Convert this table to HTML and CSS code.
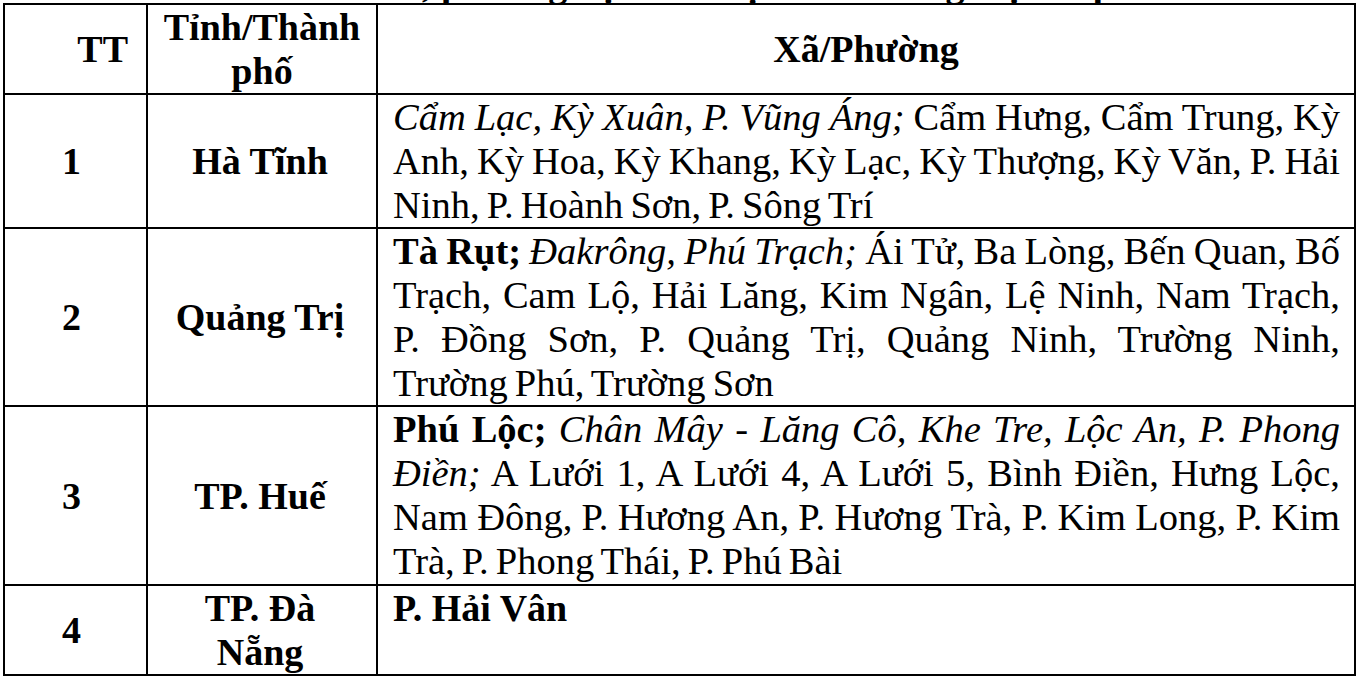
FILE: index.html
```html
<!DOCTYPE html>
<html lang="vi">
<head>
<meta charset="utf-8">
<title>Danh sách xã/phường</title>
<link rel="stylesheet" href="styles.css">
</head>
<body>
<div class="title-clip"><div class="title">Danh sách các xã, phường dự kiến chịu ảnh hưởng trực tiếp</div></div>
<table class="grid">
  <colgroup>
    <col class="c-tt">
    <col class="c-prov">
    <col class="c-list">
  </colgroup>
  <thead>
    <tr class="r-head">
      <th class="tt-head">TT</th>
      <th class="prov-head">Tỉnh/Thành phố</th>
      <th>Xã/Phường</th>
    </tr>
  </thead>
  <tbody>
    <tr class="r1">
      <td class="num">1</td>
      <td class="prov">Hà Tĩnh</td>
      <td class="list"><i>Cẩm Lạc, Kỳ Xuân, P. Vũng Áng;</i> Cẩm Hưng, Cẩm Trung, Kỳ Anh, Kỳ Hoa, Kỳ Khang, Kỳ Lạc, Kỳ Thượng, Kỳ Văn, P. Hải Ninh, P. Hoành Sơn, P. Sông Trí</td>
    </tr>
    <tr class="r2">
      <td class="num">2</td>
      <td class="prov">Quảng Trị</td>
      <td class="list"><b>Tà Rụt;</b> <i>Đakrông, Phú Trạch;</i> Ái Tử, Ba Lòng, Bến Quan, Bố Trạch, Cam Lộ, Hải Lăng, Kim Ngân, Lệ Ninh, Nam Trạch, P.&nbsp;Đồng Sơn, P. Quảng Trị, Quảng Ninh, Trường Ninh, Trường&nbsp;Phú, Trường Sơn</td>
    </tr>
    <tr class="r3">
      <td class="num">3</td>
      <td class="prov">TP. Huế</td>
      <td class="list"><b>Phú Lộc;</b> <i>Chân Mây - Lăng Cô, Khe Tre, Lộc An, P. Phong Điền;</i> A Lưới 1, A Lưới 4, A Lưới 5, Bình Điền, Hưng Lộc, Nam Đông, P. Hương An, P. Hương Trà, P. Kim Long, P. Kim Trà, P. Phong Thái, P. Phú Bài</td>
    </tr>
    <tr class="r4">
      <td class="num">4</td>
      <td class="prov">TP. Đà Nẵng</td>
      <td class="list"><b>P. Hải Vân</b></td>
    </tr>
  </tbody>
</table>
</body>
</html>
```
FILE: styles.css
```css
html, body {
  margin: 0;
  padding: 0;
  background: #ffffff;
}

body {
  font-family: "Liberation Serif", "Times New Roman", serif;
  color: #000000;
  font-size: 38px;
  line-height: 44px;
  padding: 0 0 0 3px;
}

.title-clip {
  height: 3px;
  overflow: hidden;
}

.title {
  font-weight: bold;
  text-align: center;
  width: 1250px;
  margin-top: -38px;
}

.grid {
  border-collapse: collapse;
  table-layout: fixed;
  width: 1351px;
}

.c-tt { width: 143px; }
.c-prov { width: 230px; }
.c-list { width: 978px; }

.grid th,
.grid td {
  border: 2px solid #000000;
  padding: 0;
  vertical-align: middle;
}

.grid th {
  font-weight: bold;
  text-align: center;
}

.grid .r-head th { height: 88px; }

.grid th.tt-head {
  text-align: right;
  padding-right: 18px;
}

.grid th.prov-head {
  padding: 0 10px;
}

.grid .r1 td { height: 132px; }
.grid .r2 td { height: 175px; }
.grid .r3 td { height: 177px; }
.grid .r4 td { height: 81px; }

.grid td.num {
  font-weight: bold;
  text-align: center;
  padding-right: 8px;
}

.grid td.prov {
  font-weight: bold;
  text-align: center;
  padding: 0 24px 0 20px;
}

.grid td.list {
  vertical-align: top;
  text-align: justify;
  padding: 0 14px 0 15px;
  font-size: 38.5px;
  word-spacing: -2.5px;
}

.grid .r4 td.list {
  font-size: 38px;
  word-spacing: 0;
}
```
